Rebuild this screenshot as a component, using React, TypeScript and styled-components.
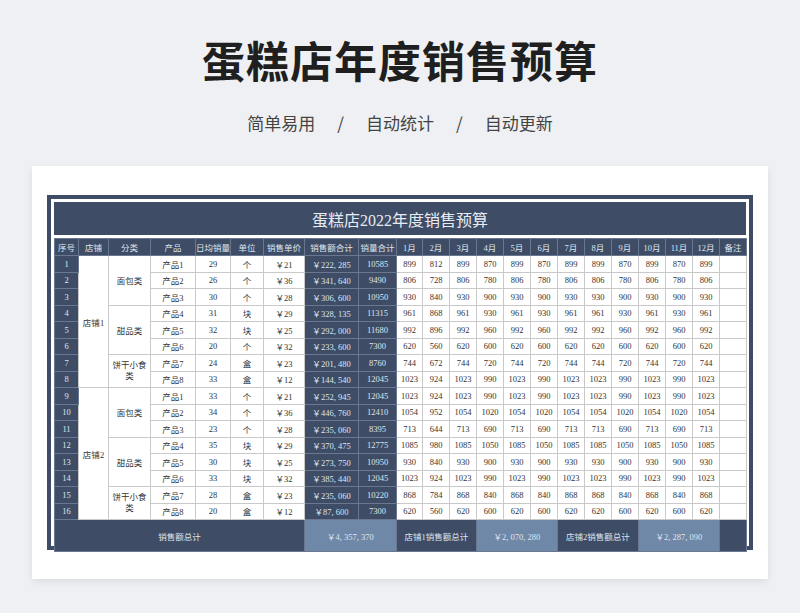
import React from "react";
import styled, { createGlobalStyle } from "styled-components";

const Global = createGlobalStyle`
  body { margin: 0; background: #eef0f3; font-family: "Liberation Serif", "Noto Sans CJK SC", serif; }
`;
const Page = styled.div`
  width: 800px; height: 613px; display: flex; flex-direction: column; align-items: center;
`;
const Title = styled.h1`
  margin: 33px 0 0; height: 52px; font: 700 43px/52px "Noto Sans CJK SC", sans-serif; color: #1f1f1f; letter-spacing: 1px;
`;
const Sub = styled.div`
  margin-top: 26px; font: 400 17px/24px "Noto Sans CJK SC", sans-serif; color: #444; word-spacing: 6px; display: flex; gap: 22px;
`;
const Card = styled.div`
  margin-top: 31px; width: 736px; height: 413px; background: #fff; box-shadow: 0 3px 8px rgba(0,0,0,0.08);
  display: flex; justify-content: center; padding-top: 29px; box-sizing: border-box;
`;
const Frame = styled.div`
  width: 706px; height: 355px; background: #3e4c66; padding: 4px; box-sizing: border-box;
`;
const Inner = styled.div`
  background: #fff; padding: 3px; height: 100%; box-sizing: border-box;
`;
const Band = styled.div`
  height: 33px; background: #3e4c66; color: #e8ecf2; font-size: 16px; display: flex; align-items: center; justify-content: center;
`;
const Table = styled.table`
  margin-top: 3px; width: 692px; border-collapse: collapse; table-layout: fixed; font-size: 8.5px;
`;
type CellProps = { $v?: "dark" | "light" | "white" };
const Td = styled.td<CellProps>`
  height: 15.5px; padding: 0; text-align: center; border: 1px solid ${p => (p.$v === "white" || !p.$v ? "#c9c9c9" : "#6a7790")};
  background: ${p => (p.$v === "dark" ? "#3e4c66" : p.$v === "light" ? "#7088a8" : "#fff")};
  color: ${p => (p.$v === "dark" || p.$v === "light" ? "#dfe5ee" : "#333")};
  white-space: nowrap; overflow: hidden;
`;
const Th = styled(Td).attrs({ as: "th" })`
  font-weight: 400; height: 16px;
`;
const Foot = styled(Td)`
  height: 31px;
`;
const Wrap = styled.span`white-space: normal; display: inline-block; width: 36px; line-height: 11px;`;

const widths = [24, 30, 42, 45, 35, 33, 41, 54, 38, 26, 27, 27, 27, 27, 27, 27, 27, 27, 27, 27, 27, 27];
const days = [31, 28, 31, 30, 31, 30, 31, 31, 30, 31, 30, 31];
const rows: [string, number, string, number, string][] = [
  ["产品1", 29, "个", 21, "222, 285"], ["产品2", 26, "个", 36, "341, 640"], ["产品3", 30, "个", 28, "306, 600"],
  ["产品4", 31, "块", 29, "328, 135"], ["产品5", 32, "块", 25, "292, 000"], ["产品6", 20, "个", 32, "233, 600"],
  ["产品7", 24, "盒", 23, "201, 480"], ["产品8", 33, "盒", 12, "144, 540"],
  ["产品1", 33, "个", 21, "252, 945"], ["产品2", 34, "个", 36, "446, 760"], ["产品3", 23, "个", 28, "235, 060"],
  ["产品4", 35, "块", 29, "370, 475"], ["产品5", 30, "块", 25, "273, 750"], ["产品6", 33, "块", 32, "385, 440"],
  ["产品7", 28, "盒", 23, "235, 060"], ["产品8", 20, "盒", 12, "87, 600"],
];
const heads = ["序号", "店铺", "分类", "产品", "日均销量", "单位", "销售单价", "销售额合计", "销量合计",
  ...days.map((_, i) => `${i + 1}月`), "备注"];

export default function App() {
  return (
    <Page>
      <Global />
      <Title>蛋糕店年度销售预算</Title>
      <Sub><span>简单易用</span><span>/</span><span>自动统计</span><span>/</span><span>自动更新</span></Sub>
      <Card>
        <Frame>
          <Inner>
            <Band>蛋糕店2022年度销售预算</Band>
            <Table>
              <colgroup>{widths.map((w, i) => <col key={i} style={{ width: w }} />)}</colgroup>
              <thead><tr>{heads.map(h => <Th key={h} $v="dark">{h}</Th>)}</tr></thead>
              <tbody>
                {rows.map((r, i) => {
                  const k = i % 8;
                  return (
                    <tr key={i}>
                      <Td $v="dark">{i + 1}</Td>
                      {k === 0 && <Td rowSpan={8}>店铺{i < 8 ? 1 : 2}</Td>}
                      {k === 0 && <Td rowSpan={3}>面包类</Td>}
                      {k === 3 && <Td rowSpan={3}>甜品类</Td>}
                      {k === 6 && <Td rowSpan={2}><Wrap>饼干小食类</Wrap></Td>}
                      <Td>{r[0]}</Td>
                      <Td>{r[1]}</Td>
                      <Td>{r[2]}</Td>
                      <Td>￥{r[3]}</Td>
                      <Td $v="dark">￥{r[4]}</Td>
                      <Td $v="dark">{r[1] * 365}</Td>
                      {days.map((d, j) => <Td key={j}>{d * r[1]}</Td>)}
                      <Td />
                    </tr>
                  );
                })}
                <tr>
                  <Foot $v="dark" colSpan={7}>销售额总计</Foot>
                  <Foot $v="light" colSpan={2}>￥4, 357, 370</Foot>
                  <Foot $v="dark" colSpan={3}>店铺1销售额总计</Foot>
                  <Foot $v="light" colSpan={3}>￥2, 070, 280</Foot>
                  <Foot $v="dark" colSpan={3}>店铺2销售额总计</Foot>
                  <Foot $v="light" colSpan={3}>￥2, 287, 090</Foot>
                  <Foot $v="dark" />
                </tr>
              </tbody>
            </Table>
          </Inner>
        </Frame>
      </Card>
    </Page>
  );
}
